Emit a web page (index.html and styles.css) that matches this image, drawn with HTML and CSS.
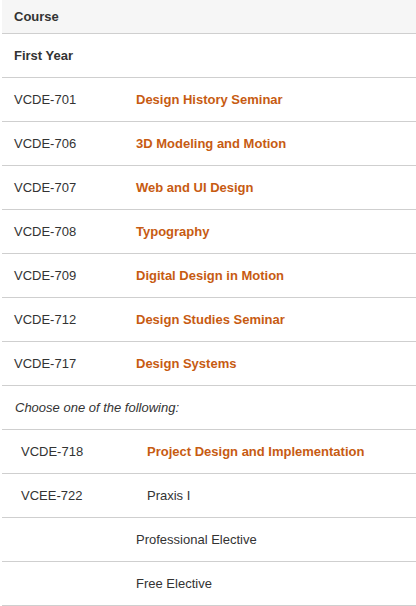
FILE: index.html
```html
<!DOCTYPE html>
<html>
<head>
<meta charset="utf-8">
<link rel="stylesheet" href="styles.css">
</head>
<body>
<div class="table">
  <div class="row head"><span class="c1">Course</span></div>
  <div class="row area"><span class="c1">First Year</span></div>
  <div class="row"><span class="c1">VCDE-701</span><a class="c2 link">Design History Seminar</a></div>
  <div class="row"><span class="c1">VCDE-706</span><a class="c2 link">3D Modeling and Motion</a></div>
  <div class="row"><span class="c1">VCDE-707</span><a class="c2 link">Web and UI Design</a></div>
  <div class="row"><span class="c1">VCDE-708</span><a class="c2 link">Typography</a></div>
  <div class="row"><span class="c1">VCDE-709</span><a class="c2 link">Digital Design in Motion</a></div>
  <div class="row"><span class="c1">VCDE-712</span><a class="c2 link">Design Studies Seminar</a></div>
  <div class="row"><span class="c1">VCDE-717</span><a class="c2 link">Design Systems</a></div>
  <div class="row comment"><span class="c1">Choose one of the following:</span></div>
  <div class="row or"><span class="c1">VCDE-718</span><a class="c2 link">Project Design and Implementation</a></div>
  <div class="row or"><span class="c1">VCEE-722</span><span class="c2">Praxis I</span></div>
  <div class="row"><span class="c1"></span><span class="c2">Professional Elective</span></div>
  <div class="row"><span class="c1"></span><span class="c2">Free Elective</span></div>
</div>
</body>
</html>
```

FILE: styles.css
```css
html, body {
  margin: 0;
  padding: 0;
  background: #fff;
}
body {
  font-family: "Liberation Sans", Arial, sans-serif;
  font-size: 13px;
  color: #333;
}
.table {
  margin-left: 2px;
  width: 414px;
}
.row {
  display: grid;
  grid-template-columns: 122px 1fr;
  align-items: center;
  height: 43px;
  border-bottom: 1px solid #cfcfcf;
  line-height: 15px;
}
.row .c1 {
  padding-left: 12px;
  white-space: nowrap;
}
.row .c2 {
  padding-left: 12px;
  white-space: nowrap;
}
.head {
  height: 33px;
  background: #f6f6f6;
  font-weight: bold;
}
.area {
  font-weight: bold;
}
.comment {
  font-style: italic;
}
.comment .c1 {
  padding-left: 13px;
}
.or {
  grid-template-columns: 133px 1fr;
}
.or .c1 {
  padding-left: 19px;
}
.link {
  color: #c75b12;
  font-weight: bold;
  text-decoration: none;
}
```
